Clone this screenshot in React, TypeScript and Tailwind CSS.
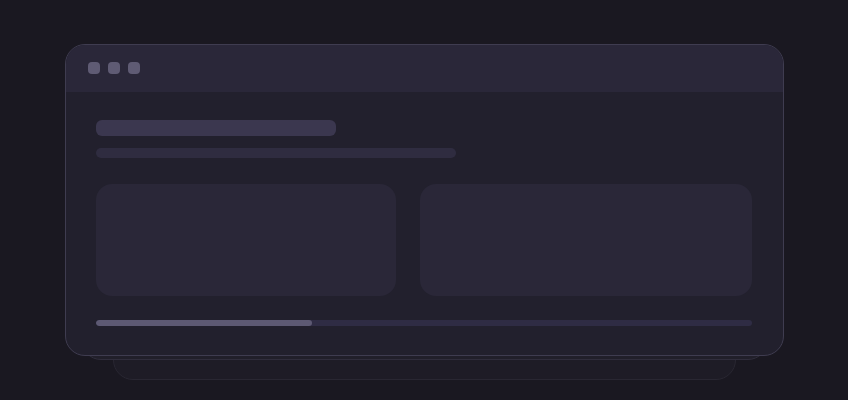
import React from 'react';

function Dots() {
  return (
    <div className="flex items-center gap-2">
      <span className="w-3 h-3 rounded-[4px] bg-[#5f5b74]" />
      <span className="w-3 h-3 rounded-[4px] bg-[#5f5b74]" />
      <span className="w-3 h-3 rounded-[4px] bg-[#5f5b74]" />
    </div>
  );
}

export default function App() {
  const progress = 33;

  return (
    <div className="w-[848px] h-[400px] bg-[#1a1821] overflow-hidden font-['Inter',sans-serif]">
      <div className="relative w-[719px] ml-[65px] pt-[44px]">
        {/* stacked layers behind the window */}
        <div className="absolute left-[48px] right-[48px] top-[200px] h-[180px] rounded-[20px] bg-[#1e1c26] border border-[#292732]" />
        <div className="absolute left-[16px] right-[16px] top-[200px] h-[160px] rounded-[20px] bg-[#211f2a] border border-[#302d3c]" />

        <div className="relative rounded-[20px] border border-[#3f3c50] bg-[#22202d] overflow-hidden">
          <div className="h-[47px] bg-[#2a2739] flex items-center px-[22px] pb-[2px]">
            <Dots />
          </div>
          <div className="pl-[30px] pr-[31px] pt-[28px] pb-[29px]">
            <div className="w-[240px] h-4 rounded-md bg-[#3b374f]" />
            <div className="w-[360px] h-[10px] mt-3 rounded-full bg-[#2f2c40]" />
            <div className="flex gap-6 mt-[26px]">
              <div className="w-[300px] h-[112px] rounded-2xl bg-[#2a2738]" />
              <div className="flex-1 h-[112px] rounded-2xl bg-[#2a2738]" />
            </div>
            <div className="mt-6 h-[6px] rounded-full bg-[#2f2c44] overflow-hidden">
              <div className="h-full rounded-full bg-[#5d5973]" style={{ width: `${progress}%` }} />
            </div>
          </div>
        </div>
      </div>
    </div>
  );
}
